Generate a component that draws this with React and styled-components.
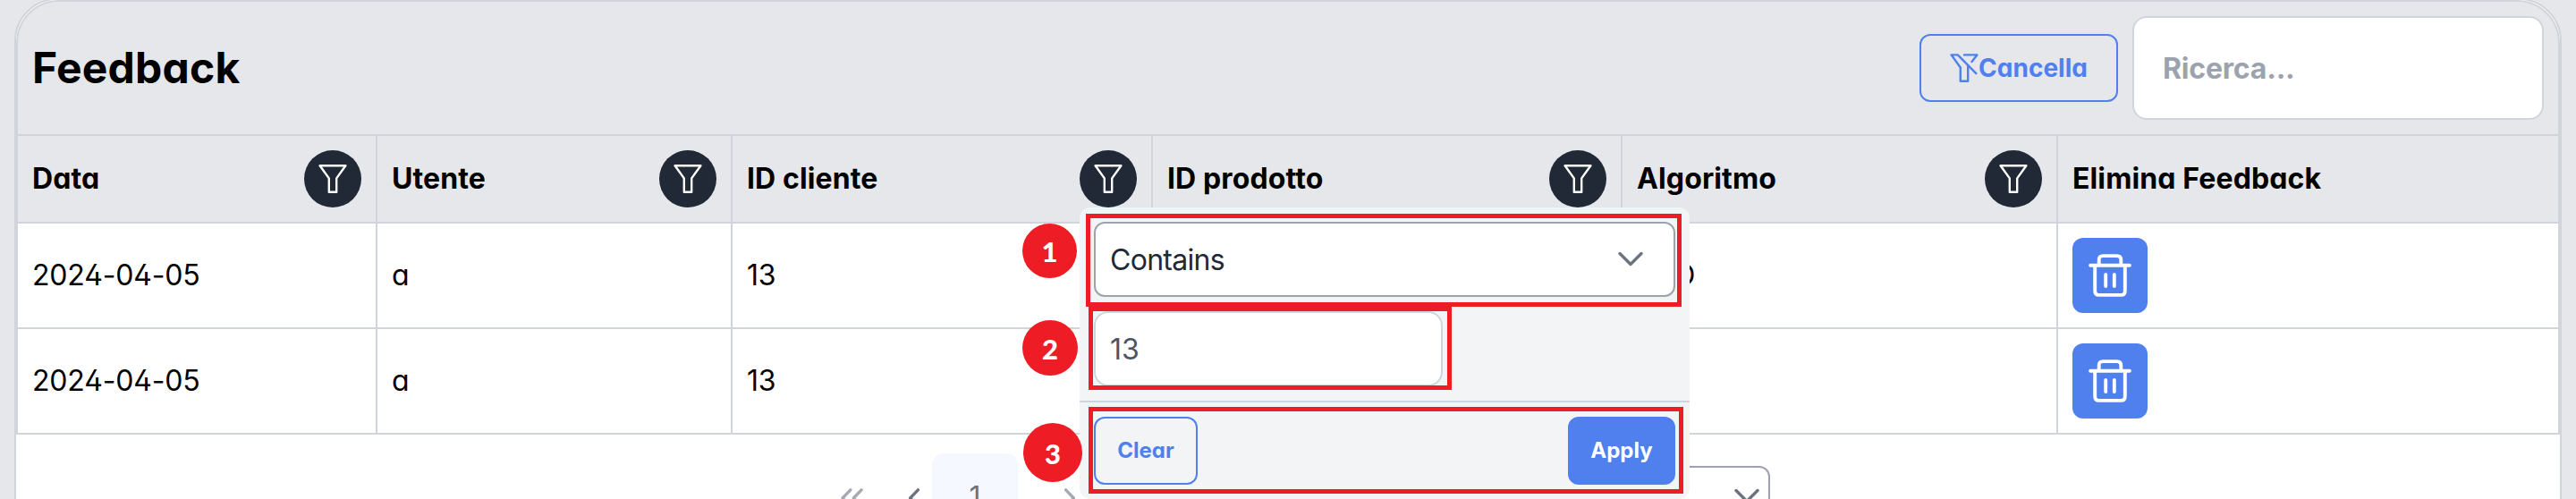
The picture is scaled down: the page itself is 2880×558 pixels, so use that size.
import React from 'react';
import styled, { createGlobalStyle, css } from 'styled-components';

const Global = createGlobalStyle`
  *, *::before, *::after { box-sizing: border-box; }
  html, body { margin: 0; background: #e5e7eb; }
  body {
    height: 558px;
    overflow: hidden;
    font-family: Inter, "Liberation Sans", sans-serif;
    font-size: 32px;
    color: #000;
  }
  button, input { font-family: inherit; margin: 0; }
`;

const feature = css`font-feature-settings: "cv02", "cv03", "cv04", "cv11";`;

const Screen = styled.main`
  position: relative;
  display: flow-root;
  height: 558px;
  padding: 0 16px;
  overflow: hidden;
`;

const Card = styled.section`
  height: 700px;
  margin-top: -2px;
  border: 2px solid #d1d5db;
  border-radius: 48px;
  background: #fff;
  overflow: hidden;
  ${feature}
`;

const TitleBar = styled.header`
  display: flex;
  align-items: center;
  height: 152px;
  padding: 0 16px;
  background: #e5e7eb;
  border: 2px solid #d1d5db;
  border-radius: 48px 48px 0 0;
`;

const Title = styled.h1`
  margin: 0 auto 0 0;
  font-size: 48px;
  line-height: 1;
  font-weight: 700;
  letter-spacing: 0.2px;
`;

const CancelButton = styled.button`
  display: flex;
  align-items: center;
  justify-content: center;
  width: 222px;
  height: 76px;
  padding: 0;
  border: 2px solid #4f80ee;
  border-radius: 12px;
  background: transparent;
  color: #4f80ee;
  font-size: 28px;
  font-weight: 700;
  ${feature}
`;

const SearchInput = styled.input`
  width: 460px;
  height: 116px;
  margin-left: 16px;
  padding: 0 32px;
  border: 2px solid #d1d5db;
  border-radius: 16px;
  background: #fff;
  font-size: 32px;
  font-weight: 700;
  letter-spacing: -0.2px;
  &::placeholder { color: #9ca3af; opacity: 1; }
`;

const Row = styled.div`
  display: grid;
  grid-template-columns: 404px 397px 470px 525px 487px 561px;
  height: ${(p) => (p.$head ? 98 : 118)}px;
  border-bottom: 2px solid #d1d5db;
  background: ${(p) => (p.$head ? '#e5e7eb' : '#fff')};
`;

const Cell = styled.div`
  display: flex;
  align-items: center;
  justify-content: space-between;
  padding: 0 16px;
  border-right: 2px solid #d1d5db;
  font-weight: ${(p) => (p.$head ? 700 : 400)};
  letter-spacing: ${(p) => (p.$head ? 0.12 : -0.18)}px;
  &:first-child { border-left: 2px solid #d1d5db; }
`;

const Label = styled.span`
  margin-top: -2px;
`;

const FilterButton = styled.button`
  display: flex;
  align-items: center;
  justify-content: center;
  width: 64px;
  height: 64px;
  padding: 0;
  border: 0;
  border-radius: 50%;
  background: #212936;
  color: #fff;
`;

const DeleteButton = styled.button`
  display: flex;
  align-items: center;
  justify-content: center;
  width: 84px;
  height: 84px;
  padding: 0;
  border: 0;
  border-radius: 12px;
  background: #4f80ee;
  color: #fff;
`;

const Pager = styled.nav`
  display: flex;
  align-items: flex-start;
  height: 128px;
  padding: 21px 0 0 887px;
`;

const PageStep = styled.button`
  display: flex;
  align-items: center;
  justify-content: center;
  width: ${(p) => p.$w}px;
  height: 96px;
  padding: 3px 0 0;
  border: 0;
  background: transparent;
  color: #6b7280;
  opacity: ${(p) => (p.$dim ? 0.6 : 1)};
`;

const PageNumber = styled.button`
  width: 96px;
  height: 96px;
  padding: 0;
  border: 0;
  border-radius: 12px;
  background: #f5f9ff;
  color: #6b7280;
  font-size: 32px;
`;

const PageSize = styled.div`
  display: flex;
  align-items: center;
  justify-content: flex-end;
  width: 160px;
  height: 68px;
  margin: 14px 0 0 565px;
  padding-right: 8px;
  border: 2px solid #9ca3af;
  border-radius: 12px;
  color: #6b7280;
`;

const Overlay = styled.div`
  position: absolute;
  left: 1207px;
  top: 232px;
  width: 682px;
  height: 326px;
  border-radius: 12px;
  background: #f3f4f6;
  overflow: hidden;
`;

const Constraints = styled.div`
  height: 218px;
  padding: 16px;
  border-bottom: 2px solid #d1d5db;
`;

const MatchSelect = styled.div`
  display: flex;
  align-items: center;
  justify-content: space-between;
  height: 84px;
  padding: 0 32px 0 16px;
  border: 2px solid #9ca3af;
  border-radius: 12px;
  background: #fff;
  color: #212936;
  letter-spacing: -0.7px;
  svg { color: #6b7280; }
`;

const ValueInput = styled.input`
  display: block;
  width: 390px;
  height: 84px;
  margin-top: 16px;
  padding: 0 16px;
  border: 2px solid #d1d5db;
  border-radius: 16px;
  background: #fff;
  color: #4b5563;
  font-size: 32px;
`;

const Actions = styled.div`
  display: flex;
  justify-content: space-between;
  padding: 16px;
`;

const ActionButton = styled.button`
  width: ${(p) => (p.$filled ? 120 : 116)}px;
  height: 76px;
  padding: 0 0 2px;
  border: 2px solid #4f80ee;
  border-radius: 12px;
  background: ${(p) => (p.$filled ? '#4f80ee' : 'transparent')};
  color: ${(p) => (p.$filled ? '#fff' : '#4f80ee')};
  font-size: 24px;
  font-weight: 700;
  ${feature}
`;

const Marker = styled.div`
  position: absolute;
  left: ${(p) => p.$x}px;
  top: ${(p) => p.$y}px;
  width: ${(p) => p.$w}px;
  height: ${(p) => p.$h}px;
  border: 5px solid #ee1c24;
`;

const Step = styled.div`
  position: absolute;
  left: ${(p) => p.$x}px;
  top: ${(p) => p.$y}px;
  display: flex;
  align-items: center;
  justify-content: center;
  width: ${(p) => p.$d}px;
  height: ${(p) => p.$d}px;
  padding-top: 1px;
  border-radius: 50%;
  background: #ee1c24;
  color: #fff;
  font: 900 31px Lato, "Open Sans", sans-serif;
`;

const Icon = ({ size, width = 2.4, children }) => (
  <svg width={size} height={size} viewBox="0 0 32 32" fill="none" stroke="currentColor"
    strokeWidth={width} strokeLinecap="round" strokeLinejoin="round">{children}</svg>
);

const FunnelIcon = () => (
  <Icon size={32}><path d="M1.6 1.3H30.4L20.2 15.4V30.8H11.8V15.4Z" /></Icon>
);

const FunnelSlashIcon = () => (
  <Icon size={32}>
    <path d="M16 1.4H30.4L24.5 9M1.6 1.4H8.8L29.3 22.2M1.6 1.4L11.8 15.5V30.8H20.2V13.5" />
  </Icon>
);

const TrashIcon = () => (
  <Icon size={48} width={2.6}>
    <path d="M1.4 8.5H30.6M4.8 8.5V27.5Q4.8 30.6 7.6 30.6H24.4Q27.2 30.6 27.2 27.5V8.5M7.8 8.5V4.4Q7.8 1.4 10.8 1.4H21.2Q24.2 1.4 24.2 4.4V8.5M12.8 15.3V24M19.2 15.3V24" />
  </Icon>
);

const ChevronDownIcon = () => (
  <Icon size={32} width={3.4}><path d="M4 9.5L16 21.5L28 9.5" /></Icon>
);

const ChevronIcon = ({ right }) => (
  <Icon size={28} width={3.8}><path d={right ? 'M11 5.5L21 16L11 26.5' : 'M21 5.5L11 16L21 26.5'} /></Icon>
);

const DoubleChevronIcon = () => (
  <Icon size={28} width={3.8}><path d="M13.5 5.5L3.5 16L13.5 26.5M27.5 5.5L17.5 16L27.5 26.5" /></Icon>
);

const columns = ['Data', 'Utente', 'ID cliente', 'ID prodotto', 'Algoritmo', 'Elimina Feedback'];
const records = [
  ['2024-04-05', 'a', '13', '', 'SVD'],
  ['2024-04-05', 'a', '13', '', ''],
];
const steps = [
  { x: 1143, y: 250, d: 61 },
  { x: 1143, y: 358, d: 62 },
  { x: 1144, y: 473, d: 66 },
];

export default function App() {
  return (
    <Screen>
      <Global />
      <Card>
        <TitleBar>
          <Title>Feedback</Title>
          <CancelButton><FunnelSlashIcon />Cancella</CancelButton>
          <SearchInput placeholder="Ricerca..." />
        </TitleBar>
        <Row $head>
          {columns.map((name, i) => (
            <Cell key={name} $head>
              <Label>{name}</Label>
              {i < 5 && <FilterButton><FunnelIcon /></FilterButton>}
            </Cell>
          ))}
        </Row>
        {records.map((record, r) => (
          <Row key={r}>
            {record.map((value, i) => <Cell key={i}><Label>{value}</Label></Cell>)}
            <Cell><DeleteButton><TrashIcon /></DeleteButton></Cell>
          </Row>
        ))}
        <Pager>
          <PageStep $w={96} $dim><DoubleChevronIcon /></PageStep>
          <PageStep $w={41}><ChevronIcon /></PageStep>
          <PageNumber>1</PageNumber>
          <PageStep $w={116} $dim><ChevronIcon right /></PageStep>
          <PageSize><ChevronDownIcon /></PageSize>
        </Pager>
      </Card>
      <Overlay>
        <Constraints>
          <MatchSelect>Contains<ChevronDownIcon /></MatchSelect>
          <ValueInput defaultValue="13" />
        </Constraints>
        <Actions>
          <ActionButton>Clear</ActionButton>
          <ActionButton $filled>Apply</ActionButton>
        </Actions>
      </Overlay>
      <Marker $x={1214} $y={239} $w={666} $h={104} />
      <Marker $x={1217} $y={343} $w={406} $h={93} />
      <Marker $x={1217} $y={455} $w={665} $h={97} />
      {steps.map((s, i) => <Step key={i} $x={s.x} $y={s.y} $d={s.d}>{i + 1}</Step>)}
    </Screen>
  );
}
